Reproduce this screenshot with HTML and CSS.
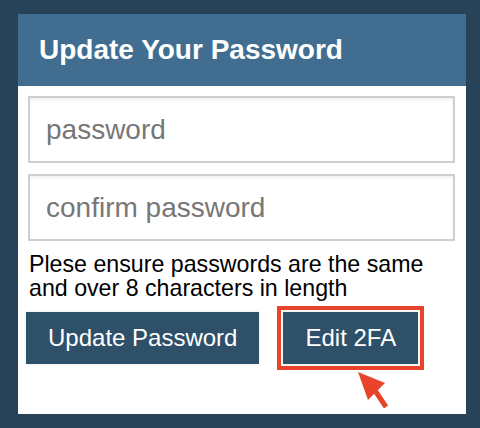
FILE: index.html
```html
<!DOCTYPE html>
<html lang="en">
<head>
    <meta charset="UTF-8">
    <meta name="viewport" content="width=device-width, initial-scale=1.0">
    <title>Update Your Password</title>
    <link rel="stylesheet" href="styles.css">
</head>
<body>
    <div class="card">
        <div class="card-header">
            <h1>Update Your Password</h1>
        </div>
        <form class="card-body" id="passwordForm">
            <input type="password" class="field" placeholder="password">
            <input type="password" class="field" placeholder="confirm password">
            <p class="hint">Plese ensure passwords are the same and over 8 characters in length</p>
            <div class="actions">
                <button type="submit" class="btn">Update Password</button>
                <button type="button" class="btn btn-marked">Edit 2FA</button>
            </div>
        </form>
        <!-- annotation arrow pointing at the 2FA button -->
        <svg class="pointer" width="50" height="50" viewBox="0 0 50 50">
            <polygon points="8,7 35,18 18,35" fill="#e8442b"/>
            <line x1="24" y1="24" x2="36" y2="42" stroke="#e8442b" stroke-width="5"/>
        </svg>
    </div>
</body>
</html>
```
FILE: styles.css
```css
body {
    margin: 0;
    background: #284357;
    font-family: "Liberation Sans", Arial, sans-serif;
    height: 428px;
    overflow: hidden;
}
.card {
    position: relative;
    width: 448px;
    height: 400px;
    margin: 14px 0 0 18px;
    background: #fff;
}
.card-header {
    height: 72px;
    background: #416e90;
    display: flex;
    align-items: center;
    padding-left: 21px;
}
h1 {
    margin: 0;
    color: #fff;
    font-size: 28px;
    font-weight: bold;
}
.card-body {
    padding: 10px 11px 0 10px;
    display: flex;
    flex-direction: column;
}
.field {
    height: 67px;
    box-sizing: border-box;
    border: 2px solid #cfcfcf;
    box-shadow: inset 0 2px 3px rgba(0,0,0,0.06);
    padding: 0 16px;
    font-family: "Liberation Sans", Arial, sans-serif;
    font-size: 28px;
    margin-bottom: 11px;
    outline: none;
}
.field::placeholder { color: #777; }
.hint {
    margin: 0 0 12px 1px;
    font-size: 23.2px;
    line-height: 24px;
    color: #000;
}
.actions {
    display: flex;
    gap: 24px;
    margin-left: -2px;
}
.btn {
    height: 52px;
    padding: 0 22px;
    border: none;
    background: #2e5069;
    color: #fff;
    font-family: "Liberation Sans", Arial, sans-serif;
    font-size: 24px;
    box-shadow: 0 0 3px rgba(0,0,0,0.12);
    cursor: pointer;
}
.btn-marked {
    outline: 4px solid #e8442b;
    outline-offset: 2px;
}
.pointer {
    position: absolute;
    left: 332px;
    top: 351px;
}
```
